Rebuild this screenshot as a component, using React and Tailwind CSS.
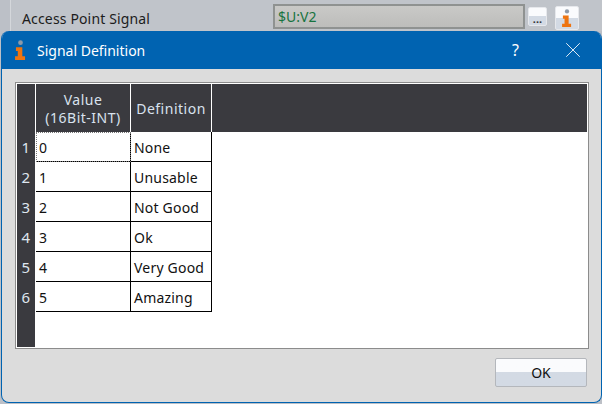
import { X } from 'lucide-react';

const rows = [
  ['0', 'None'],
  ['1', 'Unusable'],
  ['2', 'Not Good'],
  ['3', 'Ok'],
  ['4', 'Very Good'],
  ['5', 'Amazing'],
];

const InfoIcon = ({ className }) => (
  <svg viewBox="0 0 12 22" className={className}>
    <circle cx="6" cy="3" r="2.6" fill="#8d99a8" />
    <path d="M1 8h7v10h3v4H0v-4h3v-6H1z" fill="#ee7410" />
  </svg>
);

export default function App() {
  return (
    <div className="w-[602px] h-[404px] overflow-hidden bg-[#bcc0c7] text-[14px] font-['Noto_Sans','Open_Sans',sans-serif]">
      {/* Panel behind the dialog */}
      <div className="h-[31px] ml-[10px] pl-[11px] bg-[#c0c4ca] border-l border-[#d4d7db] flex items-center text-[#1c1c1c]">
        <span className="w-[251px] pt-[6px] leading-[20px] tracking-[0.15px]">Access Point Signal</span>
        <div className="w-[252px] h-[25px] mt-[2px] px-[3px] flex items-center bg-gradient-to-b from-[#c9c9c7] to-[#bdbdbb] border-2 border-[#8f9291] text-[#17733f]">
          $U:V2
        </div>
        <button className="w-[19px] h-[19px] ml-[3px] mt-[2px] flex items-end justify-center rounded-[2px] border border-[#e6e8ec] bg-gradient-to-b from-[#fafbfd] from-50% to-[#d3dae4] to-50% leading-none">
          <span className="text-[11px] leading-[12px] font-bold text-[#333]">...</span>
        </button>
        <button className="w-[24px] h-[24px] ml-[8px] mt-[4px] flex items-center justify-center rounded-[2px] border border-[#e6e8ec] bg-gradient-to-b from-[#fafbfd] from-50% to-[#d3dae4] to-50%">
          <InfoIcon className="w-[10px] h-[18px]" />
        </button>
      </div>

      {/* Dialog */}
      <div className="w-[601px] h-[372px] ml-px flex flex-col rounded-t-[8px] rounded-b-[8px] overflow-hidden bg-[#dcdcdc] border-b border-x border-[#0063b1]">
        <div className="h-[38px] shrink-0 bg-[#0063b1] flex items-center text-white">
          <InfoIcon className="w-[11px] h-[20px] ml-[13px]" />
          <span className="ml-[11px] flex-1">Signal Definition</span>
          <span className="text-[16px] mr-[41px]">?</span>
          <X className="w-[26px] h-[26px] mr-[15px]" strokeWidth={0.8} />
        </div>

        <div className="h-[267px] mt-[13px] ml-[13px] mr-[12px] shrink-0 flex p-px bg-white border border-[#8c8c8c]">
          {/* Row header column */}
          <div className="w-[18px] shrink-0 bg-[#3a3a3f] flex flex-col">
            <div className="h-[48px] shrink-0" />
            {rows.map((r, i) => (
              <div key={r[0]} className="h-[30px] pt-px flex items-center justify-end pr-[5px] text-[15px] text-[#dfe6ef]">
                {i + 1}
              </div>
            ))}
          </div>

          <div className="flex-1 flex flex-col min-w-0">
            {/* Header */}
            <div className="h-[48px] shrink-0 flex bg-[#3a3a3f] text-[#d9e2ee] text-center tracking-[0.5px]">
              <div className="w-[96px] pt-px border-x border-white flex flex-col justify-center leading-[18px]">
                <span>Value</span>
                <span>(16Bit-INT)</span>
              </div>
              <div className="w-[81px] pt-px border-r border-white flex items-center justify-center">Definition</div>
            </div>

            {/* Rows */}
            {rows.map((r, i) => (
              <div key={r[0]} className="h-[30px] ml-px flex text-[#111] tracking-[0.2px]">
                <div className={`w-[95px] pl-[3px] pt-px flex items-center border-b border-r border-black ${i === 0 ? 'outline-1 outline-dotted outline-offset-[-1px] outline-[#777]' : ''}`}>
                  {r[0]}
                </div>
                <div className="w-[81px] pl-[3px] pt-px flex items-center border-b border-r border-black">{r[1]}</div>
              </div>
            ))}
          </div>
        </div>

        <div className="flex justify-end mt-[9px] mr-[14px]">
          <button className="w-[92px] h-[29px] flex items-center justify-center rounded-[2px] border border-[#b4b7bc] bg-gradient-to-b from-[#fafbfd] from-50% to-[#d3dae4] to-50% text-[#111]">
            OK
          </button>
        </div>
      </div>
    </div>
  );
}
